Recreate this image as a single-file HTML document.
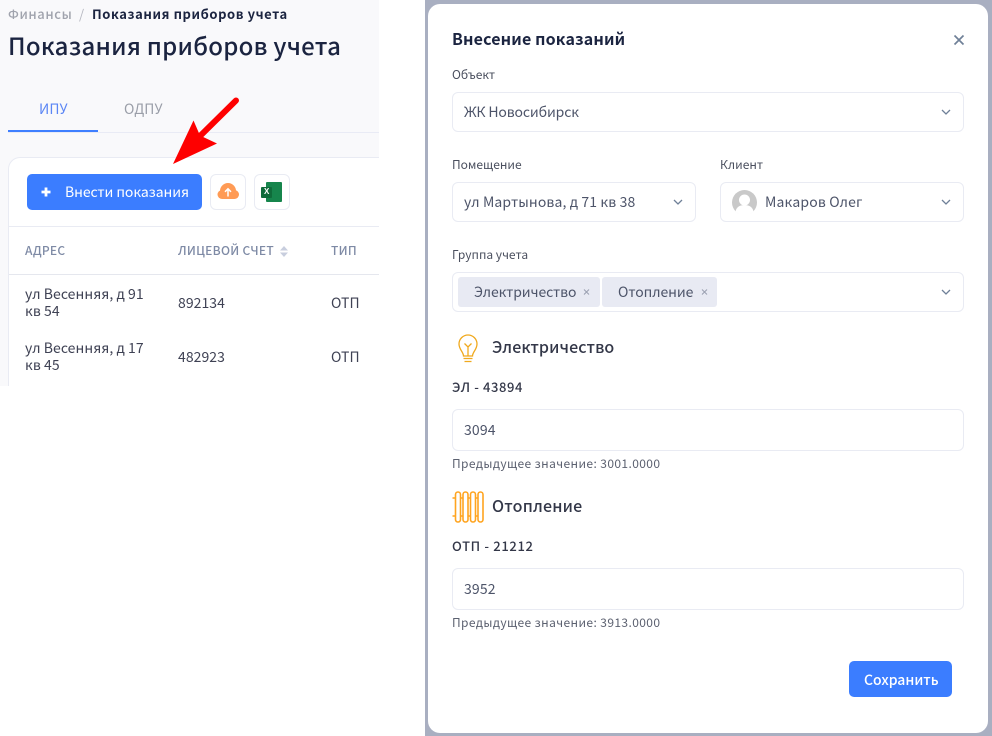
<!DOCTYPE html>
<html lang="ru"><head><meta charset="utf-8"><title>Показания приборов учета</title>
<style>
html,body{margin:0;padding:0;width:992px;height:736px;overflow:hidden;background:#fff}
body{position:relative;font-family:"Noto Sans CJK SC","Liberation Sans",sans-serif;color:#3f4254}
.a{position:absolute;white-space:nowrap;line-height:1}
.box{position:absolute;box-sizing:border-box;border:1px solid #e9ebf3;border-radius:6px;background:#fff}
.v{font-size:14px;color:#4d5469;letter-spacing:.15px}
.l{font-size:12px;color:#4a4f5e}
.h{font-size:12px;color:#7e8aa5;font-weight:500;letter-spacing:.3px}
.td{font-size:14px;color:#3f4254;letter-spacing:.05px;line-height:17px}
.tag{position:absolute;top:277px;height:30px;background:#e8eaf3;border-radius:3px}
svg{position:absolute;overflow:visible}
</style></head><body>
<!-- left page -->
<div class="a" style="left:0;top:0;width:379px;height:386px;background:#f9f9fb"></div>
<div class="a" style="left:8px;top:7px;font-size:13px;font-weight:500;color:#a0a3ad;letter-spacing:.6px">Финансы</div>
<div class="a" style="left:79px;top:7px;font-size:13px;color:#b5b7c0">/</div>
<div class="a" style="left:92px;top:7px;font-size:13px;font-weight:700;color:#1b2440;letter-spacing:.58px">Показания приборов учета</div>
<div class="a" style="left:8px;top:33px;font-size:24px;font-weight:500;color:#1b2440;letter-spacing:.25px">Показания приборов учета</div>
<div class="a" style="left:39px;top:102px;font-size:14px;color:#5b86f5;letter-spacing:.1px">ИПУ</div>
<div class="a" style="left:124px;top:102px;font-size:14px;color:#9a9ea8;letter-spacing:.2px">ОДПУ</div>
<div class="a" style="left:8px;top:132px;width:371px;height:1px;background:#e9ebf5"></div>
<div class="a" style="left:8px;top:130px;width:90px;height:2px;background:#3f7fff"></div>
<!-- card -->
<div class="a" style="left:8px;top:157px;width:371px;height:229px;box-sizing:border-box;background:#fff;border:1px solid #e9ebf3;border-right:0;border-bottom:0;border-radius:12px 0 0 0"></div>
<div class="a" style="left:27px;top:174px;width:175px;height:36px;background:#3b7dff;border-radius:5px"></div>
<svg style="left:0;top:0" width="60" height="220"><path d="M46 187.500v9M41.500 192h9" stroke="#fff" stroke-width="2.800" fill="none"/></svg>
<div class="a" style="left:65px;top:185px;font-size:14px;color:#fff;letter-spacing:-.08px">Внести показания</div>
<div class="box" style="left:210px;top:174px;width:36px;height:36px"></div>
<div class="box" style="left:254px;top:174px;width:36px;height:36px"></div>
<svg style="left:0;top:0" width="300" height="220">
<circle cx="228" cy="191" r="8" fill="#ff9b55"/><circle cx="222" cy="194.500" r="4.500" fill="#ff9b55"/><circle cx="234.500" cy="194.500" r="4.500" fill="#ff9b55"/><rect x="222" y="193" width="12.500" height="6" fill="#ff9b55"/>
<path d="M228 196.500v-7M225 191.800l3-3l3 3" stroke="#fff" stroke-width="1.500" fill="none"/>
<rect x="266" y="182" width="16" height="20" rx="1" fill="#16854c"/>
<rect x="261" y="187" width="11" height="11" rx="1" fill="#0f6b3a"/>
</svg>
<div class="a" style="left:264px;top:188px;font-size:8px;font-weight:700;color:#fff;font-family:'Liberation Sans',sans-serif">X</div>
<div class="a" style="left:9px;top:226px;width:370px;height:1px;background:#e9ebf3"></div>
<div class="a h" style="left:25px;top:245px">АДРЕС</div>
<div class="a h" style="left:178px;top:245px">ЛИЦЕВОЙ СЧЕТ</div>
<svg style="left:0;top:0" width="300" height="260"><path d="M284 246l4 4.500h-8zM284 257l4-4.500h-8z" fill="#c8cede"/></svg>
<div class="a h" style="left:331px;top:245px">ТИП</div>
<div class="a" style="left:9px;top:274px;width:370px;height:1px;background:#e5e7ee"></div>
<div class="a td" style="left:25px;top:286px">ул Весенняя, д 91<br>кв 54</div>
<div class="a td" style="left:178px;top:295px;line-height:17px">892134</div>
<div class="a td" style="left:331px;top:295px">ОТП</div>
<div class="a td" style="left:25px;top:340px">ул Весенняя, д 17<br>кв 45</div>
<div class="a td" style="left:178px;top:349px">482923</div>
<div class="a td" style="left:331px;top:349px">ОТП</div>
<!-- arrow -->
<svg style="left:0;top:0" width="260" height="180"><path d="M236 100.500L196 140" stroke="#fe0000" stroke-width="6" stroke-linecap="round" fill="none"/><path d="M173 164L193.500 120.500L200 135.500L217 143.500z" fill="#fe0000"/></svg>
<!-- modal backdrop -->
<div class="a" style="left:425px;top:0;width:567px;height:736px;background:#a9afc1"></div>
<div class="a" style="left:428px;top:4px;width:560px;height:729px;background:#fff;border-radius:12px"></div>
<div class="a" style="left:452px;top:30px;font-size:16px;font-weight:700;color:#1b2440;letter-spacing:.15px">Внесение показаний</div>
<svg style="left:0;top:0" width="992" height="60"><path d="M954.500 35.500l9 9M963.500 35.500l-9 9" stroke="#6f8098" stroke-width="1.700" fill="none"/></svg>
<div class="a l" style="left:452px;top:69px">Объект</div>
<div class="box" style="left:452px;top:92px;width:512px;height:40px"></div>
<div class="a v" style="left:464px;top:105px;letter-spacing:-.14px">ЖК Новосибирск</div>
<div class="a l" style="left:452px;top:159px">Помещение</div>
<div class="box" style="left:452px;top:182px;width:244px;height:40px"></div>
<div class="a v" style="left:464px;top:195px;letter-spacing:.11px">ул Мартынова, д 71 кв 38</div>
<div class="a l" style="left:720px;top:159px">Клиент</div>
<div class="box" style="left:720px;top:182px;width:244px;height:40px"></div>
<svg style="left:732px;top:190px" width="25" height="25"><circle cx="12.500" cy="12.500" r="12.500" fill="#c9c9c9"/><circle cx="12.500" cy="10" r="5.500" fill="#fff"/><path d="M3.500 21.500c1-5 5-6.500 9-6.500s8 1.500 9 6.500a12.500 12.500 0 0 1-18 0z" fill="#fff"/></svg>
<div class="a v" style="left:765px;top:195px">Макаров Олег</div>
<div class="a l" style="left:452px;top:249px">Группа учета</div>
<div class="box" style="left:452px;top:272px;width:512px;height:40px"></div>
<div class="tag" style="left:458px;width:142px"></div>
<div class="tag" style="left:602px;width:115px"></div>
<div class="a v" style="left:474px;top:285px;letter-spacing:-.08px">Электричество</div>
<div class="a v" style="left:618px;top:285px;letter-spacing:-.07px">Отопление</div>
<svg style="left:0;top:0" width="992" height="320" fill="none">
<path d="M584 289.500l5 5M589 289.500l-5 5M702 289.500l5 5M707 289.500l-5 5" stroke="#9aa0b0"/>
<path d="M942 110l4 4l4-4M674 200l4 4l4-4M942 200l4 4l4-4M942 290l4 4l4-4" stroke="#6f8098" stroke-width="1.300"/>
</svg>
<!-- electricity -->
<svg style="left:458px;top:333px" width="20" height="31" fill="none" stroke="#f0a91e" stroke-width="1.300"><path d="M5.500 23c0-4-4.500-6.500-4.500-12a9 9 0 0 1 18 0c0 5.500-4.500 8-4.500 12z"/><path d="M10 23v-9M6.500 10.500L10 14l3.500-3.500M5.500 25.500h9M6.500 28.500h7"/></svg>
<div class="a" style="left:492px;top:338px;font-size:16px;font-weight:500;color:#333748;letter-spacing:.12px">Электричество</div>
<div class="a" style="left:452px;top:380px;font-size:13px;font-weight:500;color:#333748;letter-spacing:.6px">ЭЛ - 43894</div>
<div class="box" style="left:452px;top:409px;width:512px;height:42px"></div>
<div class="a v" style="left:464px;top:423px">3094</div>
<div class="a l" style="left:452px;top:458px;color:#5c6170;letter-spacing:.39px">Предыдущее значение: 3001.0000</div>
<!-- heating -->
<svg style="left:452px;top:491px" width="33" height="32" fill="none" stroke="#ffa41f" stroke-width="1.600"><rect x="3.500" y="1" width="5" height="30" rx="2.500"/><rect x="11" y="1" width="5" height="30" rx="2.500"/><rect x="18.500" y="1" width="5" height="30" rx="2.500"/><rect x="26" y="1" width="5" height="30" rx="2.500"/><path d="M0.500 7h3M8.500 7h2.500M16 7h2.500M23.500 7h2.500M0.500 25h3M8.500 25h2.500M16 25h2.500M23.500 25h2.500"/></svg>
<div class="a" style="left:492px;top:497px;font-size:16px;font-weight:500;color:#333748;letter-spacing:.2px">Отопление</div>
<div class="a" style="left:452px;top:539px;font-size:13px;font-weight:500;color:#333748;letter-spacing:.65px">ОТП - 21212</div>
<div class="box" style="left:452px;top:568px;width:512px;height:42px"></div>
<div class="a v" style="left:464px;top:582px">3952</div>
<div class="a l" style="left:452px;top:617px;color:#5c6170;letter-spacing:.39px">Предыдущее значение: 3913.0000</div>
<div class="a" style="left:849px;top:661px;width:103px;height:36px;background:#3b7dff;border-radius:5px"></div>
<div class="a" style="left:864px;top:673px;font-size:14px;font-weight:500;color:#fff;letter-spacing:0">Сохранить</div>
</body></html>
